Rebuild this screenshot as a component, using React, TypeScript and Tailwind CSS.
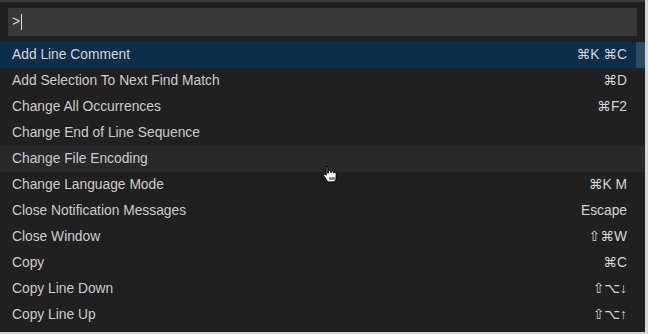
const commands: { label: string; keys?: string }[] = [
  { label: "Add Line Comment", keys: "⌘K ⌘C" },
  { label: "Add Selection To Next Find Match", keys: "⌘D" },
  { label: "Change All Occurrences", keys: "⌘F2" },
  { label: "Change End of Line Sequence" },
  { label: "Change File Encoding" },
  { label: "Change Language Mode", keys: "⌘K M" },
  { label: "Close Notification Messages", keys: "Escape" },
  { label: "Close Window", keys: "⇧⌘W" },
  { label: "Copy", keys: "⌘C" },
  { label: "Copy Line Down", keys: "⇧⌥↓" },
  { label: "Copy Line Up", keys: "⇧⌥↑" },
];

function HandCursor() {
  return (
    <svg width="16" height="19" viewBox="0 0 16 19" className="absolute left-[322px] top-[163px]">
      <path
        d="M4.5 1.5c.8 0 1.3.5 1.3 1.3v5.4l.6-.1V6.6c0-.8.5-1.2 1.2-1.2s1.2.4 1.2 1.2v1.2h.5v-.6c0-.7.5-1.1 1.1-1.1s1.1.4 1.1 1.1v.9h.4c0-.6.5-1 1.1-1s1.1.4 1.1 1.1v4.6c0 2.2-1.2 4.1-3 4.1H7.4c-1.2 0-2-.7-2.7-1.7L2 11.2c-.5-.7-.4-1.4.2-1.8.6-.4 1.2-.2 1.6.3l.4.6V2.8c0-.8.5-1.3 1.3-1.3z"
        fill="#fff"
        stroke="#000"
        strokeWidth="1"
      />
      <path d="M8 12v3M10 12v3M12 12v3" stroke="#000" strokeWidth="0.9" />
    </svg>
  );
}

export default function App() {
  return (
    <div className="w-[648px] h-[334px] bg-[#d6d6d6] overflow-hidden">
      <div
        className="relative w-[645px] h-[332px] bg-[#202020] border-t-2 border-[#3a3a3a] text-[13.8px] text-[#cccccc]"
        style={{ fontFamily: '"Liberation Sans", "DejaVu Sans", Arial, sans-serif' }}
      >
        {/* Input */}
        <div className="px-[8px] pt-[6px]">
          <div className="h-[28px] bg-[#383838] flex items-center pl-[4px] text-[#d4d4d4]">
            <span>&gt;</span>
            <span className="w-px h-[16px] bg-[#e0e0e0] ml-[1px]" />
          </div>
        </div>

        {/* List */}
        <div className="relative mt-[6px]">
          {commands.map((c, i) => (
            <div
              key={c.label}
              className={
                "h-[26px] flex items-center justify-between pl-[12px] pr-[18px] pt-px " +
                (i === 0 ? "bg-[#0b2e4b] text-[#d8d8d8]" : i === 4 ? "bg-[#27292b]" : "")
              }
            >
              <span>{c.label}</span>
              {c.keys && <span className="text-[#d6d6d6]">{c.keys}</span>}
            </div>
          ))}
          {/* Scrollbar thumb */}
          <div className="absolute right-0 top-0 w-[9px] h-[26px] bg-[#2a4a66]" />
        </div>

        <HandCursor />
      </div>
    </div>
  );
}
